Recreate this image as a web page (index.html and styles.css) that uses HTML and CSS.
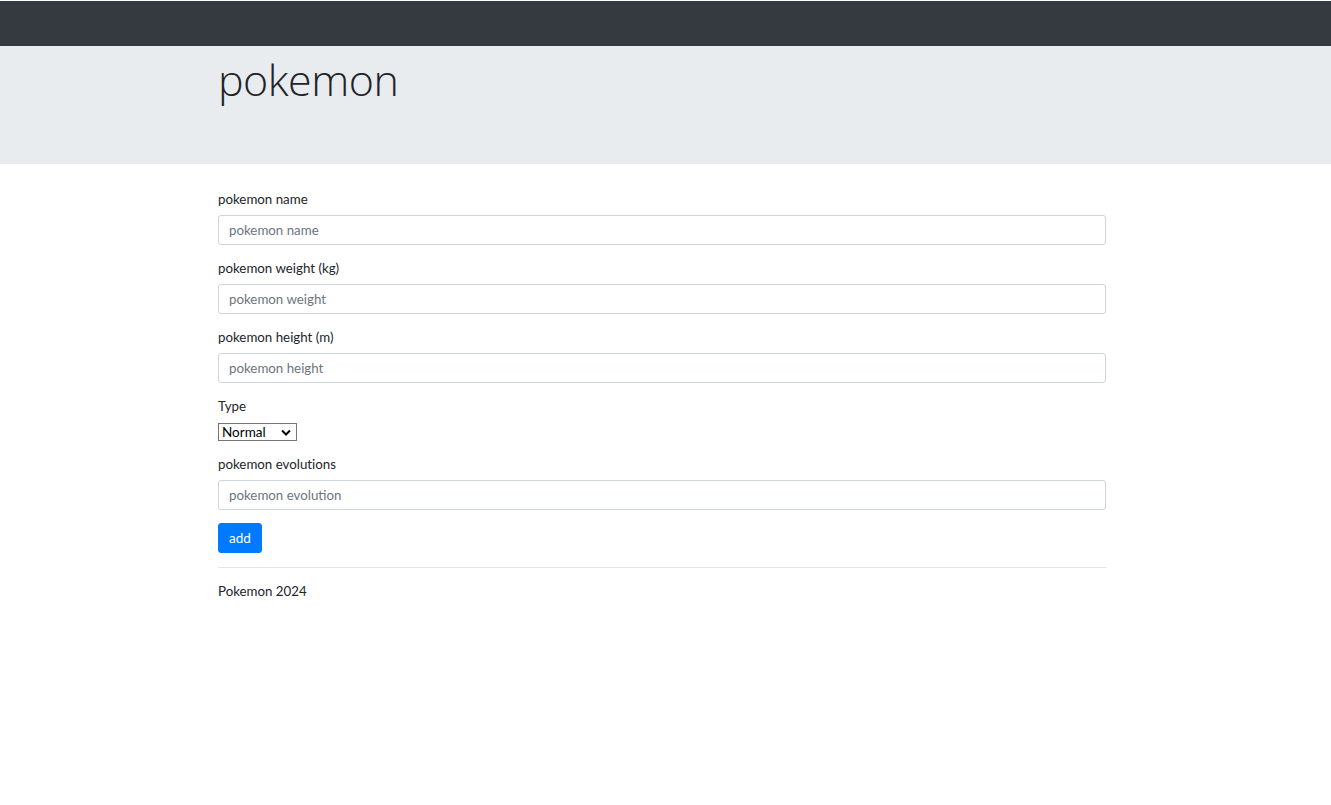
FILE: index.html
```html
<!DOCTYPE html>
<html lang="en">
<head>
<meta charset="utf-8">
<title>pokemon</title>
<link rel="stylesheet" href="styles.css">
</head>
<body>
<nav class="navbar"></nav>
<header class="jumbotron">
  <div class="container">
    <h1 class="display">pokemon</h1>
  </div>
</header>
<main class="container content">
  <form class="form">
    <div class="form-group">
      <label class="label">pokemon name</label>
      <input class="input" type="text" placeholder="pokemon name">
    </div>
    <div class="form-group">
      <label class="label">pokemon weight (kg)</label>
      <input class="input" type="text" placeholder="pokemon weight">
    </div>
    <div class="form-group">
      <label class="label">pokemon height (m)</label>
      <input class="input" type="text" placeholder="pokemon height">
    </div>
    <div class="form-group">
      <label class="label">Type</label>
      <span class="select-wrap">
        <select class="select">
          <option>Normal</option>
          <option>Fire</option>
          <option>Water</option>
          <option>Grass</option>
        </select>
        <svg class="chevron" width="10" height="7" viewBox="0 0 10 7"><path d="M1 1.5 L5 5.5 L9 1.5" fill="none" stroke="#000" stroke-width="2"/></svg>
      </span>
    </div>
    <div class="form-group">
      <label class="label">pokemon evolutions</label>
      <input class="input" type="text" placeholder="pokemon evolution">
    </div>
    <button class="btn" type="button">add</button>
  </form>
  <hr class="rule">
  <footer class="footer">Pokemon 2024</footer>
</main>
</body>
</html>
```
FILE: styles.css
```css
html, body {
  margin: 0;
  padding: 0;
}
body {
  padding-top: 1px;
  background: #fff;
  color: #212529;
  font-family: "Lato", "Open Sans", sans-serif;
  font-size: 13.3px;
  line-height: 21px;
  font-variant-ligatures: none;
}
.navbar {
  height: 45px;
  background: #343a40;
}
.jumbotron {
  background: #e9ecef;
  height: 118px;
  box-sizing: border-box;
  padding-top: 4px;
}
.container {
  width: 888px;
  margin-left: calc(50% - 447.5px);
}
.display {
  margin: 0;
  font-family: "Open Sans", sans-serif;
  font-weight: 300;
  font-size: 43px;
  line-height: 60px;
  letter-spacing: -0.5px;
}
.content {
  padding-top: 25px;
}
.form-group {
  display: flex;
  flex-direction: column;
  align-items: flex-start;
  margin-bottom: 13px;
}
.label {
  display: block;
  margin-bottom: 5px;
}
.input {
  box-sizing: border-box;
  width: 100%;
  height: 30px;
  margin: 0;
  padding: 0 10px;
  border: 1px solid #ced4da;
  border-radius: 3px;
  font-family: inherit;
  font-size: 13.3px;
  color: #495057;
  background: #fff;
}
.input::placeholder {
  color: #6c757d;
}
.select-wrap {
  position: relative;
  display: inline-block;
  margin-top: 1px;
}
.select {
  appearance: none;
  -webkit-appearance: none;
  box-sizing: border-box;
  width: 79px;
  height: 18px;
  margin: 0;
  padding: 0 0 0 3px;
  border: 1px solid #767676;
  border-radius: 0;
  background: #fff;
  color: #000;
  font-family: inherit;
  font-size: 13.5px;
  line-height: 16px;
  display: block;
}
.chevron {
  position: absolute;
  right: 6px;
  top: 6px;
  pointer-events: none;
}
.btn {
  display: block;
  box-sizing: border-box;
  height: 30px;
  padding: 0 10px;
  margin: 0;
  border: 1px solid #007bff;
  border-radius: 3px;
  background: #007bff;
  color: #fff;
  font-family: inherit;
  font-size: 13.5px;
}
.rule {
  margin: 14px 0 0;
  border: 0;
  border-top: 1px solid #e5e5e5;
}
.footer {
  padding-top: 13px;
}
```
